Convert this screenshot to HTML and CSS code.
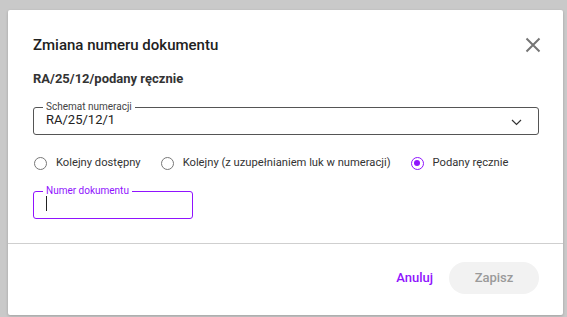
FILE: index.html
```html
<!DOCTYPE html>
<html lang="pl">
<head>
    <meta charset="UTF-8">
    <meta name="viewport" content="width=device-width, initial-scale=1.0">
    <title>Zmiana numeru dokumentu</title>
    <link rel="stylesheet" href="styles.css">
</head>
<body>
    <div class="backdrop">
        <div class="dialog">
            <div class="dialog-body">
                <div class="dialog-header">
                    <h2 class="dialog-title">Zmiana numeru dokumentu</h2>
                    <button class="close-btn" aria-label="Zamknij">
                        <svg width="16" height="16" viewBox="0 0 16 16">
                            <path d="M1.5 1.5 L14.5 14.5 M14.5 1.5 L1.5 14.5" stroke="#757575" stroke-width="2" fill="none"/>
                        </svg>
                    </button>
                </div>
                <div class="doc-number">RA/25/12/podany ręcznie</div>

                <fieldset class="field field-select">
                    <legend>Schemat numeracji</legend>
                    <div class="field-value">RA/25/12/1</div>
                    <svg class="chevron" width="11" height="7" viewBox="0 0 11 7">
                        <path d="M1 1 L5.5 5.5 L10 1" stroke="#333" stroke-width="1.2" fill="none"/>
                    </svg>
                </fieldset>

                <div class="radio-group">
                    <label class="radio"><span class="radio-dot"></span>Kolejny dostępny</label>
                    <label class="radio"><span class="radio-dot"></span>Kolejny (z uzupełnianiem luk w numeracji)</label>
                    <label class="radio checked"><span class="radio-dot"></span>Podany ręcznie</label>
                </div>

                <fieldset class="field field-input">
                    <legend>Numer dokumentu</legend>
                    <div class="field-value"><span class="caret"></span></div>
                </fieldset>
            </div>
            <div class="dialog-footer">
                <button class="btn-text">Anuluj</button>
                <button class="btn-save" disabled>Zapisz</button>
            </div>
        </div>
    </div>
</body>
</html>
```

FILE: styles.css
```css
* {
    box-sizing: border-box;
}
body {
    margin: 0;
    font-family: Roboto, "Noto Sans", Arial, sans-serif;
    background-color: #c9c9c9;
    color: #222;
}
.backdrop {
    height: 317px;
    padding: 10px 4px 2px 8px;
}
.dialog {
    background-color: #fff;
    width: 555px;
    height: 305px;
    border-radius: 2px;
    box-shadow: 0 1px 3px rgba(0, 0, 0, 0.2);
    display: flex;
    flex-direction: column;
}
.dialog-body {
    padding: 25px 24px 0 25px;
    height: 234px;
    border-bottom: 1px solid #cfcfcf;
}
.dialog-header {
    display: flex;
    justify-content: space-between;
    align-items: center;
}
.dialog-title {
    margin: 0;
    font-size: 15px;
    font-weight: 500;
    color: #212121;
    line-height: 20px;
}
.close-btn {
    background: none;
    border: none;
    padding: 0;
    margin-right: -2px;
    width: 16px;
    height: 16px;
    cursor: pointer;
}
.doc-number {
    margin-top: 16px;
    font-size: 13px;
    font-weight: 700;
    color: #333;
    line-height: 16px;
}
.field {
    margin: 0;
    border: 1px solid #555;
    border-radius: 3px;
    padding: 0 12px;
    height: 33px;
    position: relative;
}
.field legend {
    font-size: 10px;
    padding: 0 3px;
    margin-left: -3px;
    color: #444;
    line-height: 10px;
}
.field-select {
    margin-top: 15px;
    width: 506px;
}
.field-value {
    font-size: 13px;
    line-height: 15px;
    color: #222;
}
.chevron {
    position: absolute;
    right: 16px;
    top: 7px;
}
.radio-group {
    display: flex;
    align-items: center;
    gap: 20px;
    margin-top: 20px;
    margin-left: 1px;
}
.radio {
    display: flex;
    align-items: center;
    font-size: 11.2px;
    color: #333;
    line-height: 16px;
}
.radio-dot {
    width: 13px;
    height: 13px;
    border: 1.3px solid #777;
    border-radius: 50%;
    margin-right: 9px;
    position: relative;
}
.radio.checked .radio-dot {
    border-color: #9013fe;
}
.radio.checked .radio-dot::after {
    content: "";
    position: absolute;
    left: 2px;
    top: 2px;
    width: 6.4px;
    height: 6.4px;
    border-radius: 50%;
    background-color: #9013fe;
}
.field-input {
    margin-top: 15px;
    width: 160px;
    border-color: #9013fe;
}
.field-input legend {
    color: #9013fe;
}
.caret {
    display: block;
    width: 1px;
    height: 15px;
    background-color: #222;
}
.dialog-footer {
    flex: 1;
    display: flex;
    justify-content: flex-end;
    align-items: center;
    gap: 16px;
    padding: 0 24px 4px 0;
}
.btn-text {
    background: none;
    border: none;
    padding: 0;
    font-family: inherit;
    font-size: 13px;
    font-weight: 500;
    color: #9013fe;
    cursor: pointer;
}
.btn-save {
    background-color: #f2f2f2;
    border: none;
    border-radius: 16px;
    width: 90px;
    height: 32px;
    font-family: inherit;
    font-size: 13px;
    font-weight: 500;
    color: #9a9a9a;
}
```
